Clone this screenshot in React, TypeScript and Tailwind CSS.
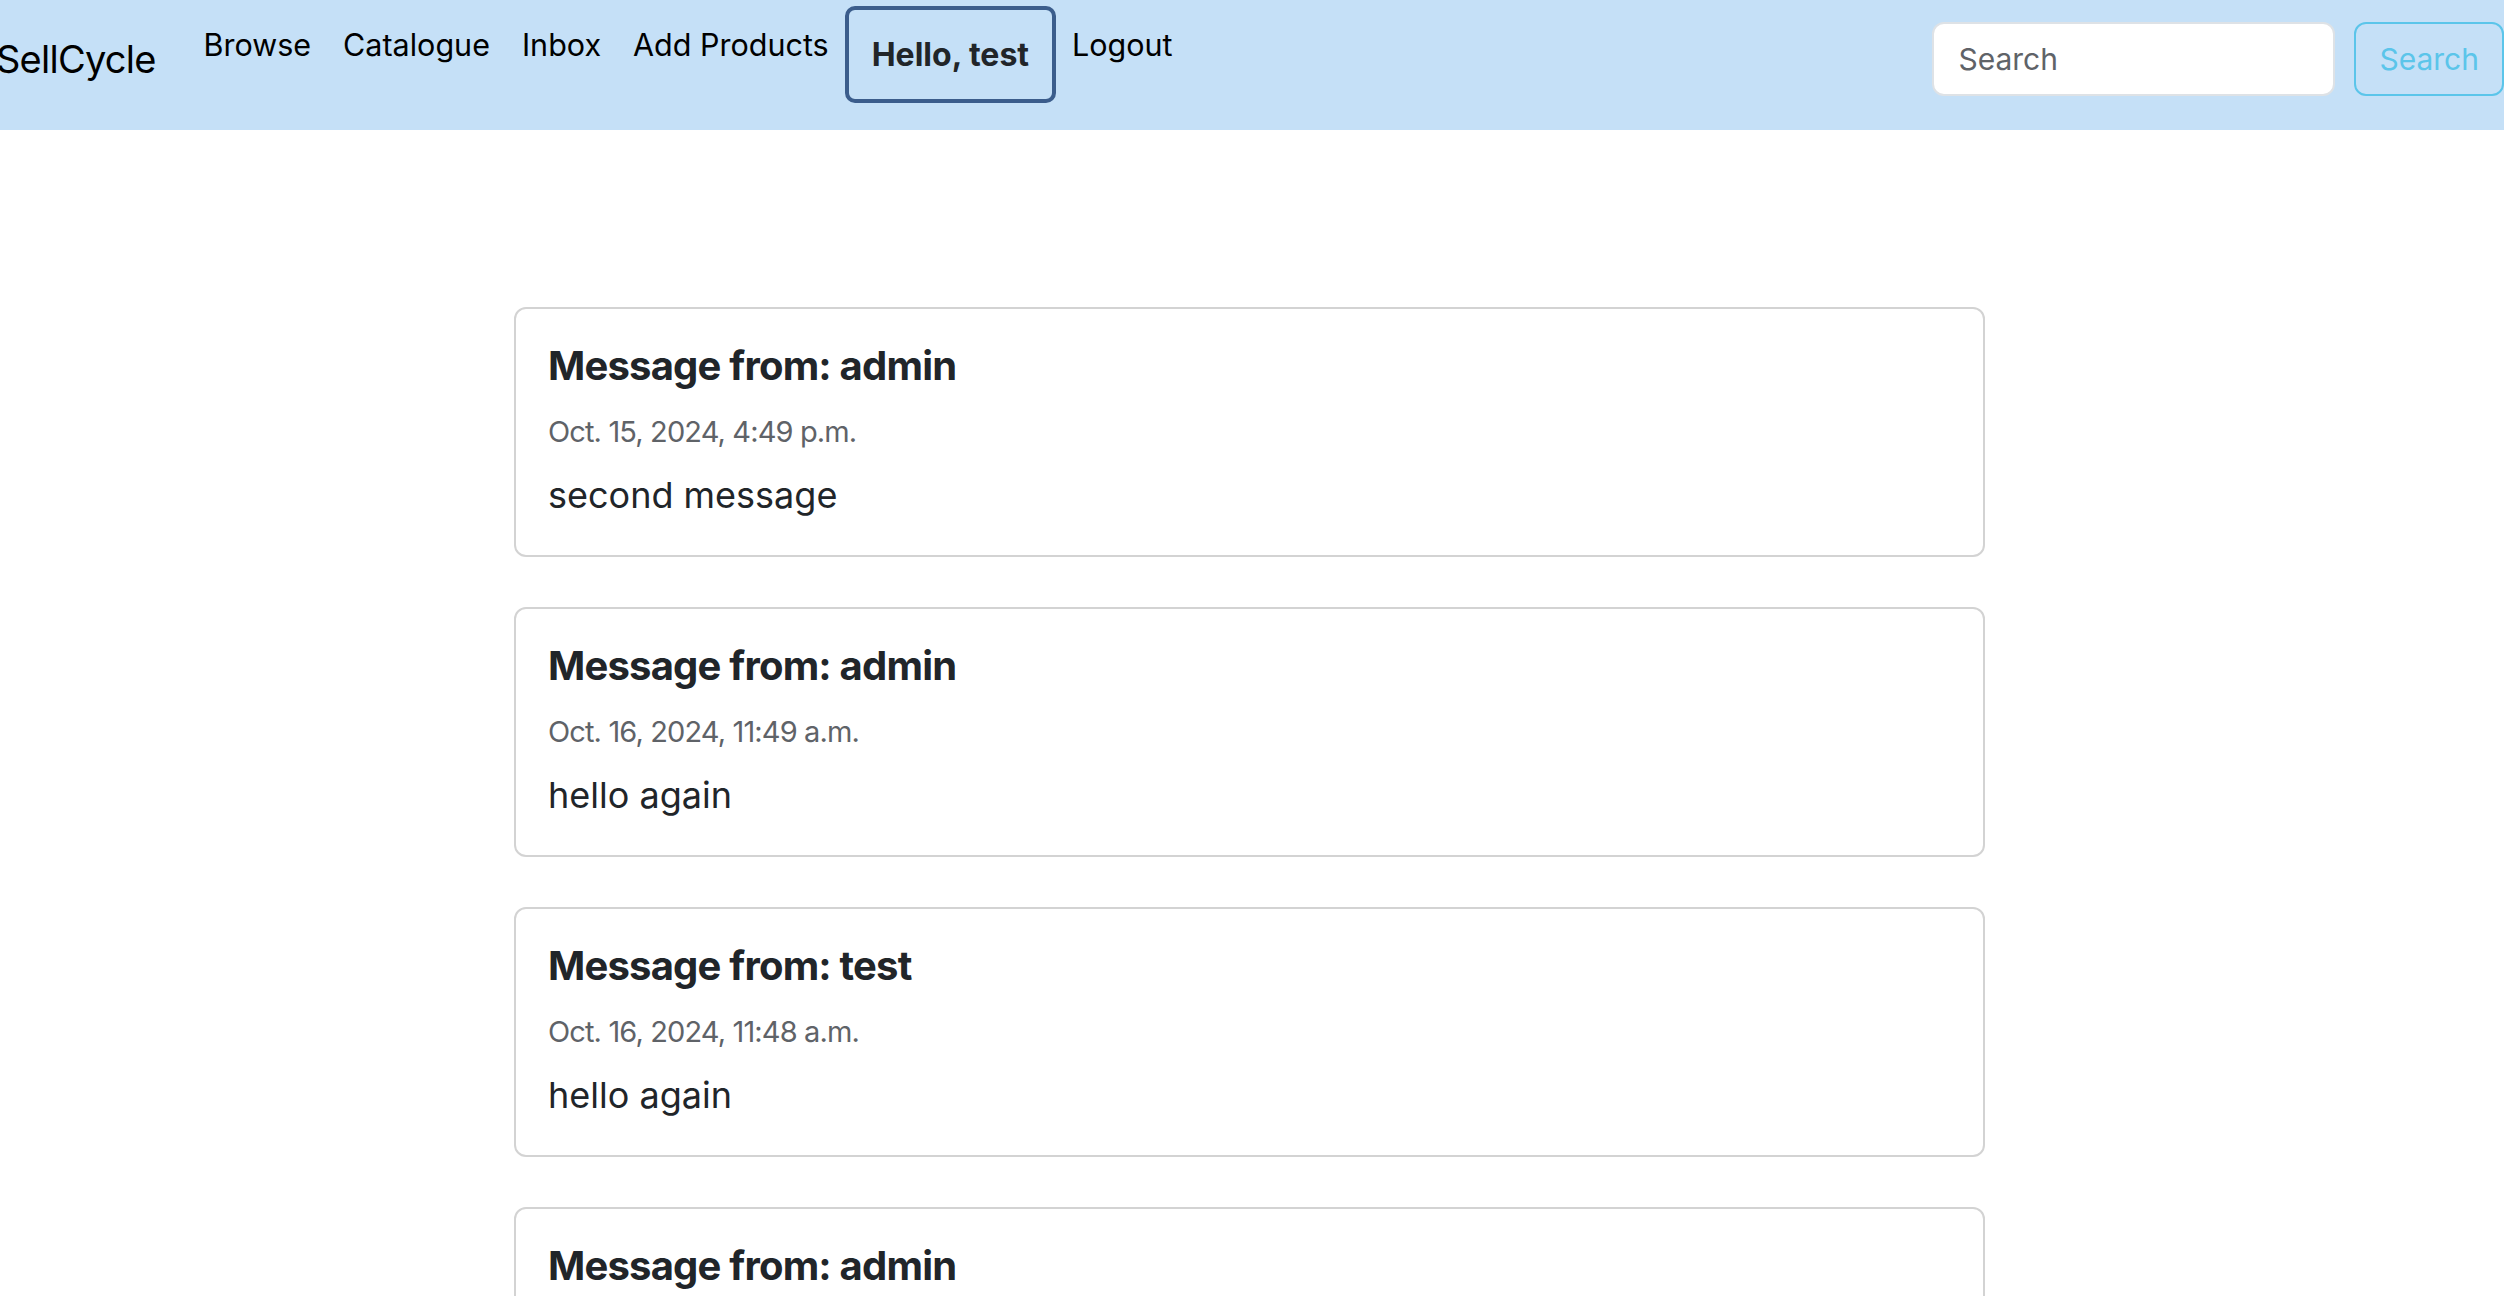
import React from 'react'

const messages = [
  { from: 'admin', date: 'Oct. 15, 2024, 4:49 p.m.', body: 'second message' },
  { from: 'admin', date: 'Oct. 16, 2024, 11:49 a.m.', body: 'hello again' },
  { from: 'test', date: 'Oct. 16, 2024, 11:48 a.m.', body: 'hello again' },
  { from: 'admin', date: 'Oct. 15, 2024, 4:31 p.m.', body: 'first message' },
]

const links = ['Browse', 'Catalogue', 'Inbox', 'Add Products']

export default function App() {
  return (
    <div className="h-screen overflow-hidden bg-white text-[#212529]"
      style={{ fontFamily: 'Inter, "Noto Sans", sans-serif' }}>
      <nav className="flex items-center h-[130px] pb-[12px] bg-[#c5e0f7] whitespace-nowrap">
        <a className="ml-[-4px] mr-[32px] text-[38px] leading-[60px] tracking-[-0.02em] text-black">SellCycle</a>
        <ul className="flex self-start mt-[6px]">
          {links.map(l => (
            <li key={l}>
              <a className="block px-[16px] pt-[16px] text-[30.5px] leading-[45px] text-black">{l}</a>
            </li>
          ))}
          <li>
            <a className="block border-[4px] border-[#3b5d8c] rounded-[10px] px-[23px] py-[22px]
              text-[32px] leading-[45px] font-bold text-[#212529]">
              Hello, test
            </a>
          </li>
          <li>
            <a className="block px-[16px] pt-[16px] text-[30.5px] leading-[45px] text-black">Logout</a>
          </li>
        </ul>
        <form className="flex items-center ml-auto mr-0">
          <input placeholder="Search"
            className="w-[403px] h-[74px] bg-white border-[2px] border-[#dee2e6] rounded-[12px] px-[24px]
            text-[30px] placeholder:text-[#5f6368] focus:outline-none" />
          <button type="button"
            className="ml-[19px] h-[74px] border-[2px] border-[#5bc5ea] rounded-[12px] px-[23px]
            text-[30px] text-[#5bc5ea]">
            Search
          </button>
        </form>
      </nav>

      <main className="pt-[177px]">
        <div className="w-[1471px] ml-[514px] space-y-[50px]">
          {messages.map((m, i) => (
            <div key={i} className="border-[2px] border-[#d3d3d3] rounded-[12px] px-[32px] pt-[34px] pb-[36px]">
              <h5 className="text-[40px] leading-[46px] font-bold tracking-[-0.02em]">Message from: {m.from}</h5>
              <p className="mt-[25px] text-[29px] leading-[36px] text-[#5f6368] tracking-[-0.03em]">{m.date}</p>
              <p className="mt-[21px] text-[36px] leading-[48px]">{m.body}</p>
            </div>
          ))}
        </div>
      </main>
    </div>
  )
}
